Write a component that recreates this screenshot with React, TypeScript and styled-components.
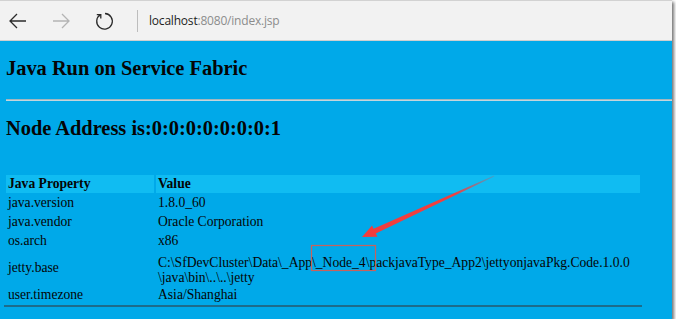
import React from "react";
import styled, { createGlobalStyle } from "styled-components";

const GlobalStyle = createGlobalStyle`
    html, body {
        margin: 0;
        padding: 0;
        background: #ffffff;
    }
`

const Frame = styled.div`
    position: relative;
    width: 672px;
    height: 319px;
    display: flex;
    flex-direction: column;
    overflow: hidden;
    box-shadow: 2px 2px 3px rgba(0, 0, 0, 0.55);
`

const Toolbar = styled.div`
    height: 39px;
    flex: none;
    display: flex;
    align-items: center;
    gap: 7px;
    background: #f2f2f2;
    border-top: 1px solid #d2d2d2;
    border-bottom: 1px solid #cfcfcf;
`

const NavButton = styled.div<{ $dim?: boolean }>`
    width: 36px;
    height: 39px;
    display: flex;
    align-items: center;
    justify-content: center;
    color: ${(p) => (p.$dim ? "#b4b4b4" : "#2b2b2b")};
`

const Divider = styled.div`
    width: 1px;
    height: 22px;
    margin: 0 4px 0 8px;
    background: #bdbdbd;
`

const Address = styled.div`
    font-family: "Open Sans", "Noto Sans", sans-serif;
    font-size: 12px;
    letter-spacing: -0.2px;
    color: #8c8c8c;
    b {
        font-weight: 400;
        color: #1e1e1e;
    }
`

const Page = styled.div`
    flex: 1;
    background: #00a9e9;
    padding: 0 0 0 6px;
    font-family: "Liberation Serif", "Times New Roman", serif;
    color: #050505;
`

const Title = styled.h2`
    font-size: 20.4px;
    font-weight: bold;
    margin: 16px 0 19px 0;
`

const Rule = styled.hr`
    margin: 0;
    border: none;
    border-top: 1px solid #a3b6be;
    border-bottom: 1px solid #c4d5dc;
`

const Table = styled.table`
    margin: 34px 0 0 -2px;
    width: 638px;
    border-spacing: 2px 1px;
    font-size: 13.6px;
    border-bottom: 2px solid #1d6c8b;
    th {
        background: #10bcf2;
        text-align: left;
        font-weight: bold;
        padding: 1px 2px 1px 2px;
        line-height: 16px;
    }
    td {
        padding: 1px 2px 1px 2px;
        line-height: 16px;
        vertical-align: middle;
    }
    td:first-child,
    th:first-child {
        width: 144px;
    }
`

const LongValue = styled.td`
    && {
        padding: 4px 2px 0 2px;
        line-height: 15px;
    }
`

const Overlay = styled.svg`
    position: absolute;
    left: 0;
    top: 0;
    pointer-events: none;
`

const BackIcon = () => (
    <svg width="20" height="18" viewBox="0 0 20 18" fill="none" stroke="currentColor" strokeWidth="1.3">
        <path d="M2 9 H18 M9 2 L2 9 L9 16" />
    </svg>
)

const ForwardIcon = () => (
    <svg width="20" height="18" viewBox="0 0 20 18" fill="none" stroke="currentColor" strokeWidth="1.3">
        <path d="M2 9 H18 M11 2 L18 9 L11 16" />
    </svg>
)

const RefreshIcon = () => (
    <svg width="20" height="20" viewBox="0 0 20 20" fill="none" stroke="currentColor" strokeWidth="1.3">
        <path d="M6.5 3.6 A7.8 7.8 0 1 0 11 2.5" />
        <path d="M2.8 3.6 H6.8 V7.6" />
    </svg>
)

const rows = [
    ["java.version", "1.8.0_60"],
    ["java.vendor", "Oracle Corporation"],
    ["os.arch", "x86"],
]

export default function App() {
    return (
        <>
            <GlobalStyle />
            <Frame>
                <Toolbar>
                    <NavButton><BackIcon /></NavButton>
                    <NavButton $dim><ForwardIcon /></NavButton>
                    <NavButton><RefreshIcon /></NavButton>
                    <Divider />
                    <Address><b>localhost</b>:8080/index.jsp</Address>
                </Toolbar>
                <Page>
                    <Title>Java Run on Service Fabric</Title>
                    <Rule />
                    <Title>Node Address is:0:0:0:0:0:0:0:1</Title>
                    <Table>
                        <thead>
                            <tr>
                                <th>Java Property</th>
                                <th>Value</th>
                            </tr>
                        </thead>
                        <tbody>
                            {rows.map(([k, v]) => (
                                <tr key={k}>
                                    <td>{k}</td>
                                    <td>{v}</td>
                                </tr>
                            ))}
                            <tr>
                                <td>jetty.base</td>
                                <LongValue>
                                    C:\SfDevCluster\Data\_App\_Node_4\packjavaType_App2\jettyonjavaPkg.Code.1.0.0
                                    <br />
                                    \java\bin\..\..\jetty
                                </LongValue>
                            </tr>
                            <tr>
                                <td>user.timezone</td>
                                <td>Asia/Shanghai</td>
                            </tr>
                        </tbody>
                    </Table>
                </Page>
                <Overlay width="672" height="319" viewBox="0 0 672 319">
                    <defs>
                        <linearGradient id="arrowFade" x1="494" y1="176" x2="362" y2="237" gradientUnits="userSpaceOnUse">
                            <stop offset="0" stopColor="#f04040" stopOpacity="0.2" />
                            <stop offset="0.3" stopColor="#f04040" stopOpacity="1" />
                            <stop offset="1" stopColor="#f23c3c" stopOpacity="1" />
                        </linearGradient>
                    </defs>
                    <rect x="311.5" y="245.5" width="64" height="25" fill="none" stroke="#c8625c" strokeWidth="1.2" />
                    <path d="M362 237 L372 225.5 L373.6 228.8 L494 175.5 L494.3 176.5 L375.8 233.4 L377.5 236.8 Z" fill="url(#arrowFade)" />
                </Overlay>
            </Frame>
        </>
    );
}
